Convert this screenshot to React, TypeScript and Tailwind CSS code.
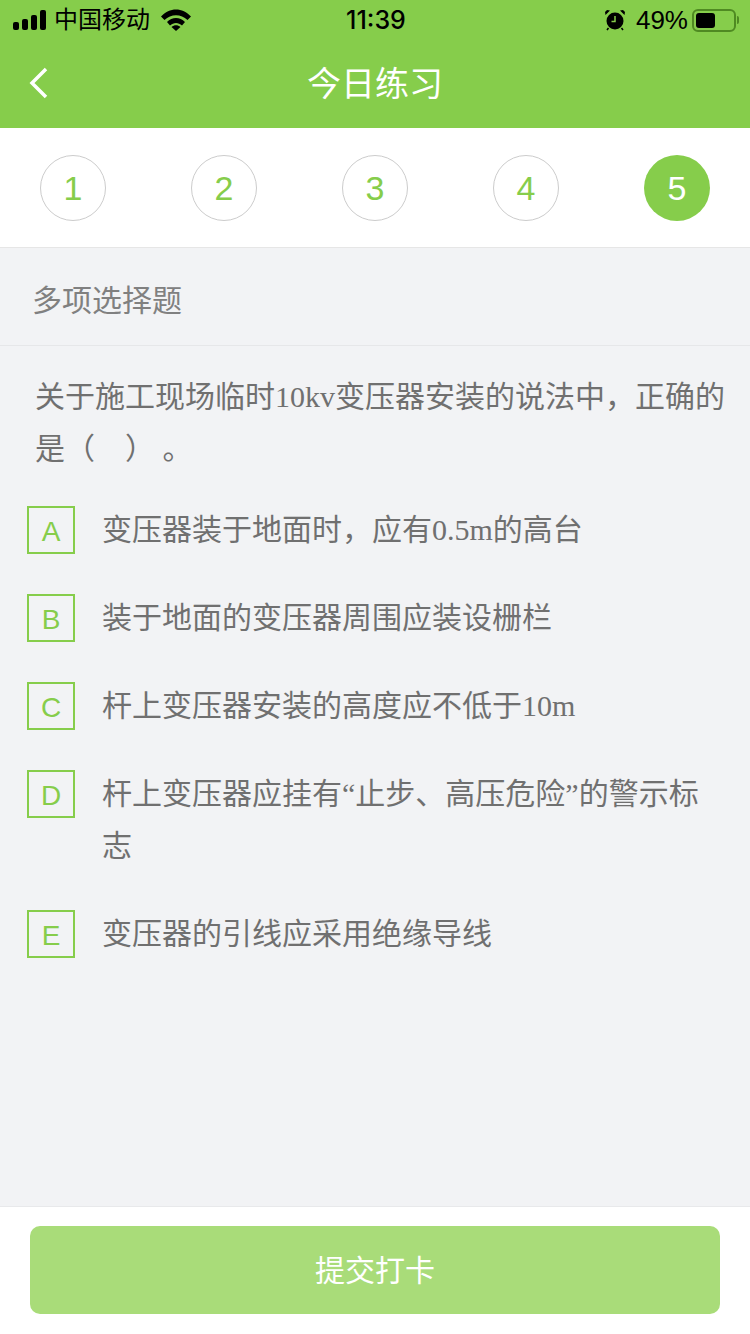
const sans = 'font-["Liberation_Sans","Noto_Sans_CJK_SC",sans-serif]'

const steps = [1, 2, 3, 4, 5]

const options = [
  { key: 'A', text: '变压器装于地面时，应有0.5m的高台' },
  { key: 'B', text: '装于地面的变压器周围应装设栅栏' },
  { key: 'C', text: '杆上变压器安装的高度应不低于10m' },
  { key: 'D', text: '杆上变压器应挂有“止步、高压危险”的警示标志' },
  { key: 'E', text: '变压器的引线应采用绝缘导线' },
]

function StatusBar() {
  return (
    <div className="flex h-10 items-center justify-between pl-[13px] pr-[11px] text-black">
      <div className="flex w-[300px] items-center">
        <div className="flex items-end gap-[3px]">
          <div className="h-[8px] w-[6px] rounded-[2px] bg-black" />
          <div className="h-[11px] w-[6px] rounded-[2px] bg-black" />
          <div className="h-[15px] w-[6px] rounded-[2px] bg-black" />
          <div className="h-[20px] w-[6px] rounded-[2px] bg-black" />
        </div>
        <span className="ml-[8px] text-[24px] leading-none">中国移动</span>
        <svg className="ml-[11px]" width="30" height="22" viewBox="0 0 30 22">
          <path d="M0 7.5 C8.5 -2 21.5 -2 30 7.5 L26.5 11 C20 4.5 10 4.5 3.5 11 Z" fill="#000" />
          <path d="M6 13 C11 7.5 19 7.5 24 13 L21 16.5 C17.5 13 12.5 13 9 16.5 Z" fill="#000" />
          <path d="M10.5 18 C13.3 15.5 16.7 15.5 19.5 18 L15 22 Z" fill="#000" />
        </svg>
      </div>
      <span className='font-["Inter",sans-serif] text-[25px] leading-none font-medium'>11:39</span>
      <div className="flex w-[300px] items-center justify-end">
        <svg width="22" height="22" viewBox="0 0 22 22">
          <circle cx="11" cy="12" r="8.5" fill="#000" />
          <path d="M1.5 6 L6 1.5 L3 1 L1 3 Z M20.5 6 L16 1.5 L19 1 L21 3 Z" fill="#000" />
          <path d="M4.5 19 L3 21 M17.5 19 L19 21" stroke="#000" strokeWidth="1.5" />
          <path d="M11 7 V12.5 H7.5" stroke="#86cd4b" strokeWidth="1.5" fill="none" />
        </svg>
        <span className="ml-[10px] text-[26px] leading-none">49%</span>
        <div className="ml-[4px] flex h-[23px] w-[44px] items-center rounded-[6px] border-2 border-[#4f8a22] p-[2px]">
          <div className="h-full w-[19px] rounded-[3px] bg-black" />
        </div>
        <div className="ml-[1px] h-[8px] w-[2px] rounded-r-full bg-[#4f8a22]" />
      </div>
    </div>
  )
}

export default function App() {
  return (
    <div className={`flex h-[1334px] w-[750px] flex-col overflow-hidden bg-[#f2f3f5] ${sans}`}>
      <header className="h-32 bg-[#86cd4b]">
        <StatusBar />
        <div className="relative flex h-[88px] items-center justify-center">
          <svg className="absolute left-[29px] top-[27px]" width="20" height="32" viewBox="0 0 20 32">
            <path d="M17 2 L3 16 L17 30" stroke="#fff" strokeWidth="3.5" fill="none" />
          </svg>
          <h1 className="text-[34px] leading-none text-white">今日练习</h1>
        </div>
      </header>

      {/* Steps */}
      <div className="flex h-[120px] items-start justify-between border-b border-[#e6e6e6] bg-white px-10 pt-[27px]">
        {steps.map((n) => (
          <div
            key={n}
            className={
              n === 5
                ? 'flex h-[66px] w-[66px] items-center justify-center rounded-full bg-[#86cd4b] text-[34px] text-white'
                : 'flex h-[66px] w-[66px] items-center justify-center rounded-full border border-[#cccccc] text-[34px] text-[#86cd4b]'
            }
          >
            {n}
          </div>
        ))}
      </div>

      <div className="flex h-[98px] items-center border-b border-[#e6e7e9] px-[32px] pt-[8px] text-[30px] text-[#808080]">
        多项选择题
      </div>

      <div className='flex-1 font-["Liberation_Serif","Noto_Sans_CJK_SC",sans-serif] text-[30px] leading-[52px] text-[#707070]'>
        <p className="pl-[35px] pr-[25px] pt-[25px]">关于施工现场临时10kv变压器安装的说法中，正确的是（&nbsp;&nbsp;&nbsp;&nbsp;）&nbsp;。</p>
        <div className="mt-[29px] flex flex-col gap-9">
          {options.map((o) => (
            <div key={o.key} className="flex items-start pl-[27px] pr-[40px]">
              <div className={`mt-[2px] flex h-12 w-12 shrink-0 items-center justify-center border-2 border-[#86cd4b] pt-[3px] text-[28px] leading-none text-[#86cd4b] ${sans}`}>
                {o.key}
              </div>
              <span className="ml-[27px]">{o.text}</span>
            </div>
          ))}
        </div>
      </div>

      <div className="h-[128px] border-t border-[#e8e9eb] bg-white px-[30px] pt-[19px]">
        <button className="flex h-[88px] w-full items-center justify-center rounded-[10px] bg-[#a9dc79] text-[30px] text-white">
          提交打卡
        </button>
      </div>
    </div>
  )
}
